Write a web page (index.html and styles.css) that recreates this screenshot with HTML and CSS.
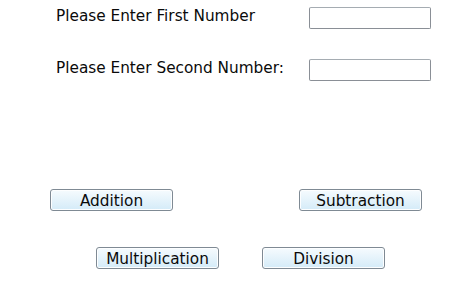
FILE: index.html
```html
<!DOCTYPE html>
<html lang="en">
<head>
    <meta charset="UTF-8">
    <title>Calculator</title>
    <link rel="stylesheet" href="styles.css">
</head>
<body>
    <div class="calc">
        <div class="field-row">
            <label for="first">Please Enter First Number</label>
            <input type="text" id="first">
        </div>
        <div class="field-row second">
            <label for="second">Please Enter Second Number:</label>
            <input type="text" id="second">
        </div>
        <div class="btn-row top">
            <button class="btn">Addition</button>
            <button class="btn">Subtraction</button>
        </div>
        <div class="btn-row bottom">
            <button class="btn">Multiplication</button>
            <button class="btn">Division</button>
        </div>
    </div>
</body>
</html>
```

FILE: styles.css
```css
* {
    margin: 0;
    padding: 0;
    box-sizing: border-box;
}

body {
    background: #fff;
    font-family: "DejaVu Sans", Verdana, sans-serif;
    font-size: 15.3px;
    color: #0a0a0a;
}

.calc {
    width: 450px;
    padding-top: 7px;
}

.field-row {
    display: flex;
    justify-content: space-between;
    align-items: flex-start;
    height: 22px;
    padding-left: 56px;
    padding-right: 19px;
}

.field-row label {
    line-height: 18px;
}

.field-row.second {
    margin-top: 30px;
}

input {
    width: 122px;
    height: 22px;
    border: 1px solid #8a8f96;
    border-top-color: #a5acb2;
    border-radius: 2px;
    background: #fff;
}

.btn-row {
    display: flex;
    height: 22px;
}

.btn-row.top {
    margin-top: 108px;
    padding-left: 50px;
    gap: 126px;
}

.btn-row.bottom {
    margin-top: 36px;
    padding-left: 96px;
    gap: 43px;
}

.btn {
    width: 123px;
    height: 22px;
    padding: 3px 0 0;
    line-height: 17px;
    font-family: "DejaVu Sans", Verdana, sans-serif;
    font-size: 15.3px;
    color: #0a0a0a;
    border: 1px solid #7f8a94;
    border-radius: 3px;
    background: linear-gradient(#f6fbfe, #d4ebf8);
    box-shadow: inset 0 0 0 1px #fdfeff;
}
```
